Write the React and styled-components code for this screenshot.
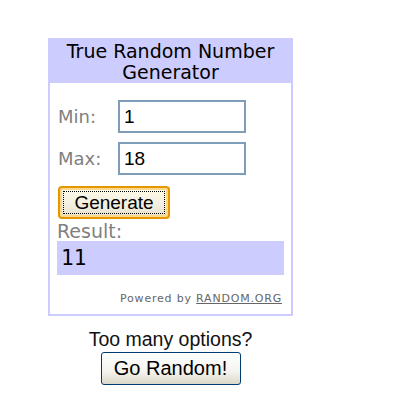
import React, { useState } from "react";
import styled, { createGlobalStyle } from "styled-components";

const GlobalStyle = createGlobalStyle`
  body {
    margin: 0;
    background: #ffffff;
  }
`;

const Page = styled.div`
  width: 400px;
  height: 400px;
  box-sizing: border-box;
  padding: 38px 0 0 48px;
  font-family: "DejaVu Sans", Verdana, sans-serif;
`;

const Column = styled.div`
  width: 245px;
  display: flex;
  flex-direction: column;
  align-items: center;
`;

const Widget = styled.div`
  width: 245px;
  height: 278px;
  box-sizing: border-box;
  border: 2px solid #ccccff;
  border-top: none;
  background: #ffffff;
  display: flex;
  flex-direction: column;
`;

const Header = styled.div`
  height: 45px;
  margin: 0 -2px;
  background: #ccccff;
  color: #000;
  font-size: 19px;
  line-height: 21px;
  text-align: center;
  display: flex;
  align-items: center;
  justify-content: center;
  padding-top: 3px;
  box-sizing: border-box;
`;

const Body = styled.div`
  display: flex;
  flex-direction: column;
  padding: 17px 7px 0 7px;
`;

const Row = styled.div`
  display: grid;
  grid-template-columns: 61px 128px;
  align-items: center;
  margin-bottom: ${(p) => p.gap}px;
`;

const Label = styled.label`
  color: #808080;
  font-size: 18px;
  padding-left: 1px;
`;

const Input = styled.input`
  width: 128px;
  height: 33px;
  box-sizing: border-box;
  border: 2px solid #7f9db9;
  padding: 0 4px;
  font-family: "Liberation Sans", Arial, sans-serif;
  font-size: 19px;
  color: #000;
  outline: none;
`;

const GenerateButton = styled.button`
  width: 112px;
  height: 33px;
  margin: 2px 0 0 1px;
  box-sizing: border-box;
  border: 2px solid #e59700;
  border-radius: 4px;
  background: linear-gradient(#fffbe8, #f2efe0 60%, #e5e1cc);
  box-shadow: inset 0 0 0 2px #fdd889;
  font-family: "Liberation Sans", Arial, sans-serif;
  font-size: 19px;
  color: #000;
  padding: 0;
  position: relative;
  cursor: pointer;

  &::after {
    content: "";
    position: absolute;
    inset: 3px;
    border: 1px dotted #000;
  }
`;

const ResultLabel = styled.div`
  color: #808080;
  font-size: 19px;
  line-height: 20px;
  margin: 2px 0 0 0;
`;

const ResultBox = styled.div`
  width: 227px;
  height: 34px;
  background: #ccccff;
  font-family: "DejaVu Sans Mono", "Liberation Mono", monospace;
  font-size: 21px;
  color: #000;
  display: flex;
  align-items: center;
  padding-left: 4px;
  box-sizing: border-box;
`;

const Powered = styled.div`
  margin-top: 17px;
  padding-right: 2px;
  text-align: right;
  font-size: 11px;
  letter-spacing: 0.8px;
  color: #666;

  a {
    color: #666;
    text-decoration: underline;
  }
`;

const Question = styled.div`
  margin-top: 12px;
  font-family: "Liberation Sans", Arial, sans-serif;
  font-size: 19.5px;
  line-height: 22px;
  color: #111;
`;

const GoButton = styled.button`
  width: 140px;
  height: 33px;
  margin-top: 2px;
  border: 1px solid #003c74;
  border-radius: 3px;
  background: linear-gradient(#ffffff, #f4f3ee 60%, #dcd8c8);
  font-family: "Liberation Sans", Arial, sans-serif;
  font-size: 20px;
  color: #000;
  padding: 0;
  cursor: pointer;
`;

const App = () => {
  const [min, setMin] = useState("1");
  const [max, setMax] = useState("18");
  const [result] = useState("11");

  return (
    <Page>
      <GlobalStyle />
      <Column>
        <Widget>
          <Header>
            True Random Number
            <br />
            Generator
          </Header>
          <Body>
            <Row gap={9}>
              <Label>Min:</Label>
              <Input value={min} onChange={(e) => setMin(e.target.value)} />
            </Row>
            <Row gap={9}>
              <Label>Max:</Label>
              <Input value={max} onChange={(e) => setMax(e.target.value)} />
            </Row>
            <GenerateButton>Generate</GenerateButton>
            <ResultLabel>Result:</ResultLabel>
            <ResultBox>{result}</ResultBox>
            <Powered>
              Powered by <a href="#">RANDOM.ORG</a>
            </Powered>
          </Body>
        </Widget>
        <Question>Too many options?</Question>
        <GoButton>Go Random!</GoButton>
      </Column>
    </Page>
  );
};

export default App;
